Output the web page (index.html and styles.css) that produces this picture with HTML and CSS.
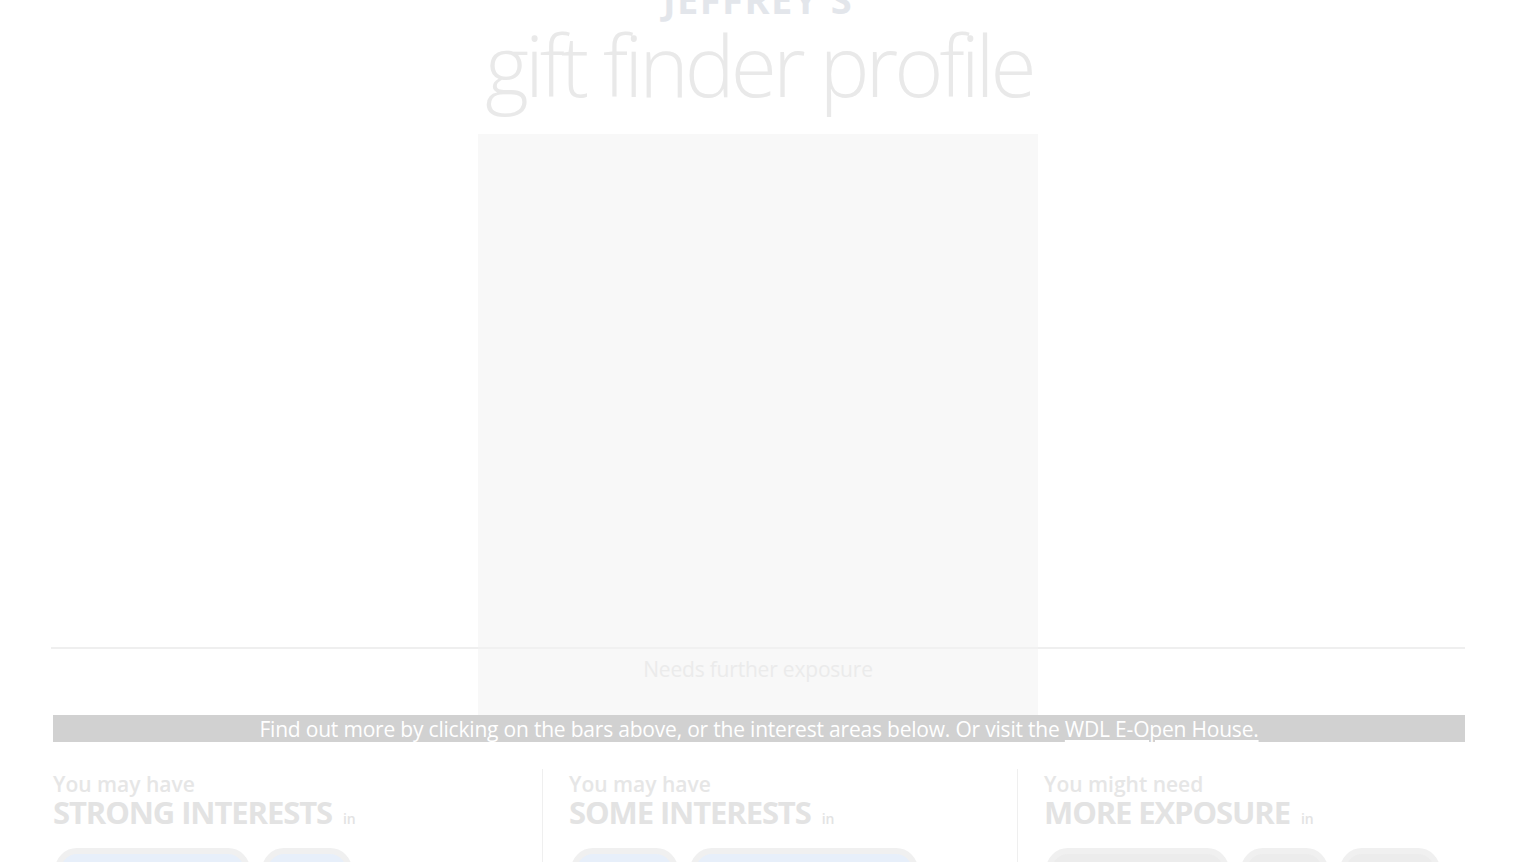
FILE: index.html
```html
<!DOCTYPE html>
<html lang="en">
<head>
<meta charset="utf-8">
<title>Jeffrey's gift finder profile</title>
<link rel="stylesheet" href="styles.css">
</head>
<body>
<div class="page">
  <header class="masthead">
    <h2 class="owner">JEFFREY'S</h2>
    <h1 class="title">gift finder profile</h1>
  </header>

  <section class="chart">
    <div class="plot side"></div>
    <div class="plot mid"></div>
    <div class="plot side"></div>
    <div class="label side"></div>
    <div class="label mid">Needs further exposure</div>
    <div class="label side"></div>
  </section>

  <p class="info">Find out more by clicking on the bars above, or the interest areas below. Or visit the <a href="#">WDL E-Open House.</a></p>

  <section class="groups">
    <div class="group">
      <p class="lead">You may have</p>
      <h3 class="kind">STRONG INTERESTS <span class="in">in</span></h3>
      <div class="pills">
        <span class="pill w1">Interest</span>
        <span class="pill w2">Interest</span>
      </div>
    </div>
    <div class="group sep">
      <p class="lead">You may have</p>
      <h3 class="kind">SOME INTERESTS <span class="in">in</span></h3>
      <div class="pills">
        <span class="pill w3">Interest</span>
        <span class="pill w4">Interest</span>
      </div>
    </div>
    <div class="group sep">
      <p class="lead">You might need</p>
      <h3 class="kind">MORE EXPOSURE <span class="in">in</span></h3>
      <div class="pills">
        <span class="pill grey w5">Interest</span>
        <span class="pill grey w6">Interest</span>
        <span class="pill grey w7">Interest</span>
      </div>
    </div>
  </section>
</div>
</body>
</html>
```

FILE: styles.css
```css
html, body {
  margin: 0;
  padding: 0;
  background: #ffffff;
  overflow: hidden;
}

body {
  font-family: "Open Sans", "DejaVu Sans", sans-serif;
  color: #e6e6e6;
}

.page {
  width: 1412px;
  margin-left: 53px;
}

.masthead {
  text-align: center;
}

.owner {
  margin: -20px 0 0 -2px;
  font-size: 38px;
  line-height: 38px;
  font-weight: 700;
  letter-spacing: 1.5px;
  color: #e3e6eb;
}

.title {
  margin: 5px 0 0 0;
  font-size: 84px;
  line-height: 84px;
  font-weight: 300;
  letter-spacing: -4px;
  color: #e9e9e9;
  height: 111px;
}

.chart {
  display: grid;
  grid-template-columns: 1fr 560px 1fr;
  grid-template-rows: 515px 66px;
  margin-left: -2px;
}

.plot {
  border-bottom: 2px solid #efefef;
}

.mid {
  background: #f8f8f8;
}

.plot.mid {
  border-bottom-color: #f1f1f1;
}

.label.mid {
  text-align: center;
  font-size: 21px;
  line-height: 24px;
  padding-top: 8px;
  color: #ebebeb;
  letter-spacing: -0.2px;
}

.info {
  margin: 0;
  height: 27px;
  background: #d1d1d1;
  color: #ffffff;
  text-align: center;
  font-size: 21px;
  line-height: 28px;
  letter-spacing: -0.2px;
  white-space: nowrap;
}

.info a {
  color: #ffffff;
  text-decoration: underline;
  text-underline-offset: 3px;
}

.groups {
  display: grid;
  grid-template-columns: 489px 475px 1fr;
  margin-top: 27px;
}

.group {
  padding-top: 4px;
}

.group.sep {
  border-left: 1px solid #efefef;
  padding-left: 26px;
}

.lead {
  margin: 0;
  font-size: 21px;
  line-height: 22px;
  font-weight: 600;
  letter-spacing: 0;
  color: #e6e6e6;
}

.kind {
  margin: 0;
  font-size: 31px;
  line-height: 34px;
  font-weight: 700;
  letter-spacing: -1.1px;
  color: #e3e3e3;
}

.in {
  font-size: 14px;
  font-weight: 600;
  letter-spacing: 0;
  margin-left: 4px;
}

.pills {
  display: flex;
  gap: 12px;
  margin-top: 12px;
  margin-left: 2px;
}

.pill {
  display: inline-block;
  height: 34px;
  border: 6px solid #f0f0f0;
  border-radius: 22px;
  background: #e7effa;
  color: #c7d3e3;
  font-size: 16px;
  line-height: 64px;
  text-align: center;
  overflow: hidden;
}

.pill.grey {
  background: #ececec;
  color: #d8d8d8;
}

.w1 { width: 183px; }
.w2 { width: 78px; }
.w3 { width: 95px; }
.w4 { width: 216px; }
.w5 { width: 171px; }
.w6 { width: 75px; }
.w7 { width: 88px; }
```
